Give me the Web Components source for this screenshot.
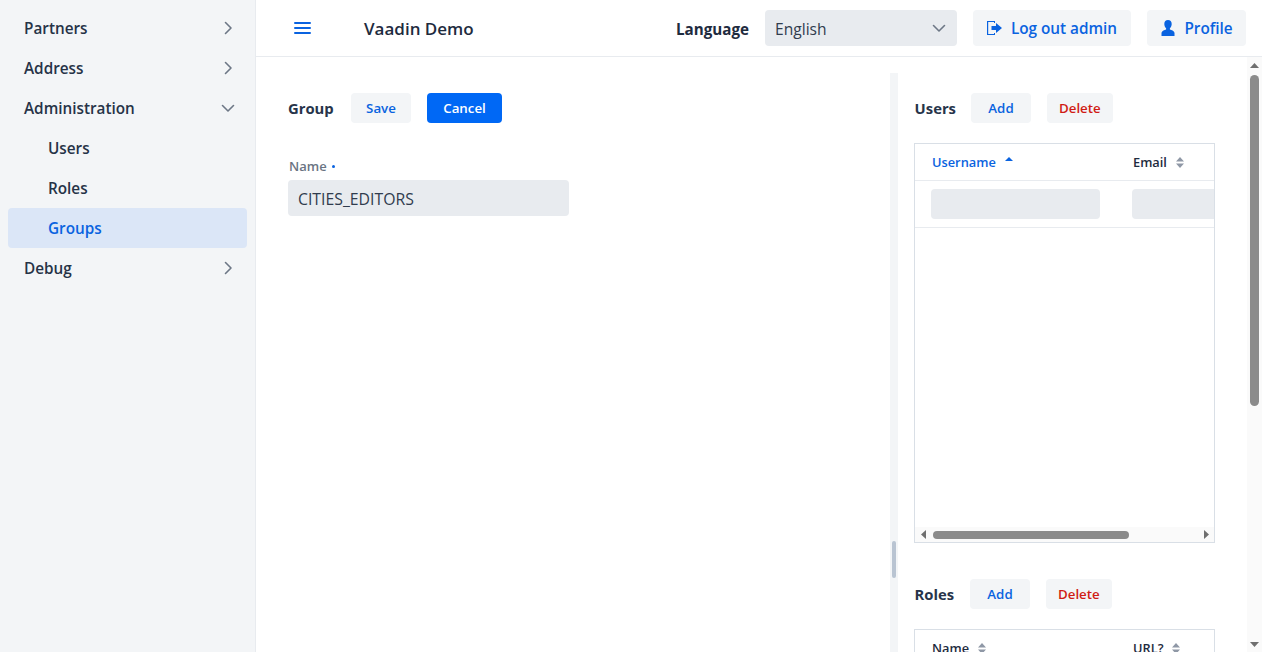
<!DOCTYPE html>
<html lang="en">
<head>
<meta charset="utf-8">
<title>Vaadin Demo</title>
<style>
  html, body { margin: 0; height: 100%; overflow: hidden; }
  body {
    font-family: "Open Sans", "Noto Sans", "Liberation Sans", sans-serif;
    font-size: 15.6px;
    color: #1e2b3e;
    background: #fff;
  }
  app-shell { height: 652px; }
</style>
</head>
<body>
<app-shell>
  <side-nav slot="drawer">
    <nav-item arrow="right">Partners</nav-item>
    <nav-item arrow="right">Address</nav-item>
    <nav-item arrow="down">Administration</nav-item>
    <nav-item sub>Users</nav-item>
    <nav-item sub>Roles</nav-item>
    <nav-item sub selected>Groups</nav-item>
    <nav-item arrow="right">Debug</nav-item>
  </side-nav>
  <top-bar slot="navbar">
    <ui-button size="m" tone="primary" icon="logout" slot="actions" style="width:158px">Log out admin</ui-button>
    <ui-button size="m" tone="primary" icon="user" slot="actions" style="width:99px">Profile</ui-button>
  </top-bar>
  <split-view>
    <div slot="start">
      <section-bar title="Group" tw="47">
        <ui-button tone="primary">Save</ui-button>
        <ui-button tone="solid">Cancel</ui-button>
      </section-bar>
      <text-field label="Name" value="CITIES_EDITORS"></text-field>
    </div>
    <div slot="end">
      <section-bar title="Users" tw="41" indent>
        <ui-button tone="primary">Add</ui-button>
        <ui-button tone="error">Delete</ui-button>
      </section-bar>
      <data-grid first="Username" second="Email" sorted skeleton></data-grid>
      <section-bar title="Roles" tw="40" indent class="next">
        <ui-button tone="primary">Add</ui-button>
        <ui-button tone="error">Delete</ui-button>
      </section-bar>
      <data-grid first="Name" second="URL?"></data-grid>
    </div>
  </split-view>
</app-shell>

<script>
const ICONS = {
  right: '<svg width="24" height="24" viewBox="0 0 24 24" fill="none" stroke="currentColor" stroke-width="1.6" stroke-linecap="round" stroke-linejoin="round"><path d="M9.5 6.5 15 12l-5.5 5.5"/></svg>',
  down: '<svg width="24" height="24" viewBox="0 0 24 24" fill="none" stroke="currentColor" stroke-width="1.6" stroke-linecap="round" stroke-linejoin="round"><path d="M6.5 9.5 12 15l5.5-5.5"/></svg>',
  logout: '<svg width="16" height="16" viewBox="0 0 16 16" fill="currentColor"><path d="M0 1h8v2H7V2H1.200v12H7v-1h1v2H0z"/><path d="M4.500 6H9V3l6 5-6 5v-3H4.500z"/></svg>',
  user: '<svg width="16" height="16" viewBox="0 0 16 16" fill="currentColor"><path d="M8 0c2.300 0 3.700 1.600 3.700 4 0 1.700-.8 3.400-1.800 4.300v1.300c1.600.5 4.100 1.300 4.600 3.100V16h-13v-3.300c.5-1.800 3-2.600 4.600-3.100V8.300C5.100 7.400 4.300 5.700 4.300 4 4.300 1.600 5.700 0 8 0z"/></svg>'
};

class AppShell extends HTMLElement {
  constructor() {
    super();
    this.attachShadow({ mode: "open" });
    this.shadowRoot.innerHTML = `
      <style>
        :host { display: grid; grid-template-columns: 256px 1fr; grid-template-rows: 57px 1fr; overflow: hidden; }
        .drawer { grid-row: 1 / 3; min-height: 0; }
        .main { display: flex; min-height: 0; min-width: 0; }
        .scroll { flex: 1; min-width: 0; overflow: hidden; padding: 16px 0 0 16px; }
      </style>
      <div class="drawer"><slot name="drawer"></slot></div>
      <slot name="navbar"></slot>
      <div class="main">
        <div class="scroll"><slot></slot></div>
        <scroll-bar></scroll-bar>
      </div>
    `;
  }
}

class SideNav extends HTMLElement {
  constructor() {
    super();
    this.attachShadow({ mode: "open" });
    this.shadowRoot.innerHTML = `
      <style>
        :host { display: flex; flex-direction: column; height: 100%; box-sizing: border-box;
          padding: 8px 8px 0; background: #f3f5f7; border-right: 1px solid #e8ebef; }
      </style>
      <slot></slot>
    `;
  }
}

class NavItem extends HTMLElement {
  constructor() {
    super();
    this.attachShadow({ mode: "open" });
    const arrow = this.getAttribute("arrow");
    this.shadowRoot.innerHTML = `
      <style>
        :host { display: flex; align-items: center; height: 40px; padding: 0 7px 0 16px; border-radius: 4px;
          font-weight: 550; font-size: 15.3px; color: #263347; }
        :host([sub]) { padding-left: 40px; }
        :host([selected]) { background: #dbe6f7; color: #0a63e0; }
        .text { flex: 1; }
        .arrow { display: flex; color: #6d7786; }
      </style>
      <span class="text"><slot></slot></span>
      ${arrow ? `<span class="arrow">${ICONS[arrow]}</span>` : ""}
    `;
  }
}

class TopBar extends HTMLElement {
  constructor() {
    super();
    this.attachShadow({ mode: "open" });
    this.shadowRoot.innerHTML = `
      <style>
        :host { display: flex; align-items: center; box-sizing: border-box; height: 57px;
          padding: 0 16px 1px 38px; border-bottom: 1px solid #e8ebef; background: #fff; }
        .menu { display: flex; color: #0a63e0; margin-right: 53px; }
        .title { font-size: 17px; font-weight: 550; color: #1e2b3e; flex: 1; padding-top: 2px; }
        .actions { display: flex; align-items: center; gap: 16px; }
      </style>
      <span class="menu">
        <svg width="17" height="14" viewBox="0 0 17 14" fill="none" stroke="currentColor" stroke-width="2" stroke-linecap="round"><path d="M1 2h15M1 7h15M1 12h15"/></svg>
      </span>
      <span class="title">Vaadin Demo</span>
      <div class="actions">
        <lang-select></lang-select>
        <slot name="actions"></slot>
      </div>
    `;
  }
}

class LangSelect extends HTMLElement {
  constructor() {
    super();
    this.attachShadow({ mode: "open" });
    this.shadowRoot.innerHTML = `
      <style>
        :host { display: flex; align-items: center; gap: 16px; }
        .lang { font-weight: 700; font-size: 15.2px; color: #1e2b3e; padding-top: 2px; }
        .box { display: flex; align-items: center; justify-content: space-between; box-sizing: border-box;
          width: 192px; height: 36px; padding: 2px 6px 0 10px; background: #e8ebef; border-radius: 4px; color: #303c4e; }
        .arrow { display: flex; color: #6d7786; margin-top: -2px; }
      </style>
      <span class="lang">Language</span>
      <div class="box"><span>English</span><span class="arrow">${ICONS.down}</span></div>
    `;
  }
}

class UiButton extends HTMLElement {
  constructor() {
    super();
    this.attachShadow({ mode: "open" });
    const icon = this.getAttribute("icon");
    this.shadowRoot.innerHTML = `
      <style>
        :host { display: inline-flex; align-items: center; justify-content: center; gap: 8px; box-sizing: border-box;
          height: 30px; min-width: 60px; padding: 0 12px; border-radius: 4px; background: #f3f5f7; font-size: 13.3px; font-weight: 600; }
        :host([size="m"]) { height: 36px; padding: 0; font-size: 15.3px; font-weight: 550; }
        :host([tone="primary"]) { color: #0a63e0; }
        :host([tone="error"]) { color: #d01c15; }
        :host([tone="solid"]) { background: #0068f5; color: #fff; min-width: 75px; }
        svg { display: block; }
      </style>
      ${icon ? ICONS[icon] : ""}
      <slot></slot>
    `;
  }
}

class SplitView extends HTMLElement {
  constructor() {
    super();
    this.attachShadow({ mode: "open" });
    this.shadowRoot.innerHTML = `
      <style>
        :host { display: flex; height: 974px; }
        .start { box-sizing: border-box; width: 618px; padding: 20px 16px; flex: none; }
        .bar { flex: none; width: 8px; background: #f3f5f7; display: flex; align-items: center; justify-content: center; }
        .bar i { display: block; width: 4px; height: 37px; border-radius: 2px; background: #b9c4d2; margin-top: -2px; }
        .end { box-sizing: border-box; width: 349px; flex: none; padding: 20px 32px 0 16px; }
      </style>
      <div class="start"><slot name="start"></slot></div>
      <div class="bar"><i></i></div>
      <div class="end"><slot name="end"></slot></div>
    `;
  }
}

class SectionBar extends HTMLElement {
  constructor() {
    super();
    this.attachShadow({ mode: "open" });
    const title = this.getAttribute("title");
    this.shadowRoot.innerHTML = `
      <style>
        :host { display: flex; align-items: center; gap: 16px; height: 30px; }
        :host(.next) { margin-top: 36px; }
        :host([indent]) .t { text-indent: .6px; }
        .t { flex: none; width: ${this.getAttribute("tw")}px; font-size: 14.8px; font-weight: 700; color: #27344a; white-space: nowrap; }
        ::slotted(*) { flex: none; }
      </style>
      <span class="t">${title}</span>
      <slot></slot>
    `;
    this.removeAttribute("title");
  }
}

class TextField extends HTMLElement {
  constructor() {
    super();
    this.attachShadow({ mode: "open" });
    this.shadowRoot.innerHTML = `
      <style>
        :host { display: block; width: 281px; margin-top: 32px; }
        label { display: flex; align-items: center; gap: 5px; height: 25px; padding: 0 0 4px 1px; box-sizing: border-box;
          font-size: 13px; font-weight: 600; color: #6a7483; }
        label i { width: 3px; height: 3px; border-radius: 50%; background: #0a63e0; margin-top: 1px; }
        .input { display: flex; align-items: center; box-sizing: border-box; height: 36px; padding: 2px 10px 0;
          background: #e8ebef; border-radius: 4px; color: #303c4e; font-weight: 500; font-size: 15.8px; }
      </style>
      <label>${this.getAttribute("label")}<i></i></label>
      <div class="input">${this.getAttribute("value")}</div>
    `;
  }
}

class DataGrid extends HTMLElement {
  constructor() {
    super();
    this.attachShadow({ mode: "open" });
    const sorted = this.hasAttribute("sorted");
    const both = '<svg width="8" height="11" viewBox="0 0 8 11" fill="#8f98a6"><path d="M4 0l4 4.500H0zM4 11l4-4.500H0z"/></svg>';
    const up = '<svg width="8" height="11" viewBox="0 0 8 11" fill="#0a63e0"><path d="M4 0l4 4H0z"/></svg>';
    this.shadowRoot.innerHTML = `
      <style>
        :host { display: flex; flex-direction: column; box-sizing: border-box; height: 400px; margin-top: 20px;
          border: 1px solid #d9dfe6; overflow: hidden; font-size: 12.8px; font-weight: 600; }
        .view { flex: 1; overflow: hidden; min-height: 0; }
        .head, .row { display: grid; grid-template-columns: 201px 201px; width: 402px; border-bottom: 1px solid #e8ebef; }
        .head > div { display: flex; align-items: center; gap: 9px; height: 36px; padding-left: 17px; color: #1e2b3e; }
        .head > div.on { color: #0a63e0; }
        .row > div { padding: 8px 16px; height: 46px; box-sizing: border-box; }
        .row i { display: block; height: 30px; background: #e8ebef; border-radius: 4px; }
      </style>
      <div class="view">
        <div class="head">
          <div class="${sorted ? "on" : ""}">${this.getAttribute("first")}${sorted ? up : both}</div>
          <div>${this.getAttribute("second")}${both}</div>
        </div>
        ${this.hasAttribute("skeleton") ? '<div class="row"><div><i></i></div><div><i></i></div></div>' : ""}
      </div>
      <scroll-bar horizontal></scroll-bar>
    `;
  }
}

class ScrollBar extends HTMLElement {
  constructor() {
    super();
    this.attachShadow({ mode: "open" });
    const h = this.hasAttribute("horizontal");
    const arrows = h ? ["M5 0v9L0 4.500z", "M0 0v9l5-4.500z"] : ["M4.500 0 9 5H0z", "M4.500 5 9 0H0z"];
    const size = h ? 'width="5" height="9" viewBox="0 0 5 9"' : 'width="9" height="5" viewBox="0 0 9 5"';
    this.shadowRoot.innerHTML = `
      <style>
        :host { display: flex; flex: none; flex-direction: ${h ? "row" : "column"}; ${h ? "height" : "width"}: 15px;
          background: #fafafa; align-items: center; }
        .btn { flex: none; ${h ? "width" : "height"}: 16px; ${h ? "height: 15px" : "width: 15px"}; display: flex; align-items: center; justify-content: center; }
        .track { flex: 1; display: flex; ${h ? "height: 15px" : "width: 15px"}; align-self: stretch; align-items: center;
          flex-direction: ${h ? "row" : "column"}; justify-content: flex-start; }
        .thumb { background: #8b8b8b; ${h ? "height: 8px; width: 196px; margin-left: 2px" : "width: 9px; height: 331px; margin-top: 2px"}; border-radius: 5px; flex: none; }
        svg { fill: #6f6f6f; }
      </style>
      <div class="btn"><svg ${size}><path d="${arrows[0]}"/></svg></div>
      <div class="track"><div class="thumb"></div></div>
      <div class="btn"><svg ${size}><path d="${arrows[1]}"/></svg></div>
    `;
  }
}

// children first, so the shell's slots get already upgraded content
customElements.define("scroll-bar", ScrollBar);
customElements.define("ui-button", UiButton);
customElements.define("nav-item", NavItem);
customElements.define("side-nav", SideNav);
customElements.define("lang-select", LangSelect);
customElements.define("top-bar", TopBar);
customElements.define("text-field", TextField);
customElements.define("section-bar", SectionBar);
customElements.define("data-grid", DataGrid);
customElements.define("split-view", SplitView);
customElements.define("app-shell", AppShell);
</script>
</body>
</html>
